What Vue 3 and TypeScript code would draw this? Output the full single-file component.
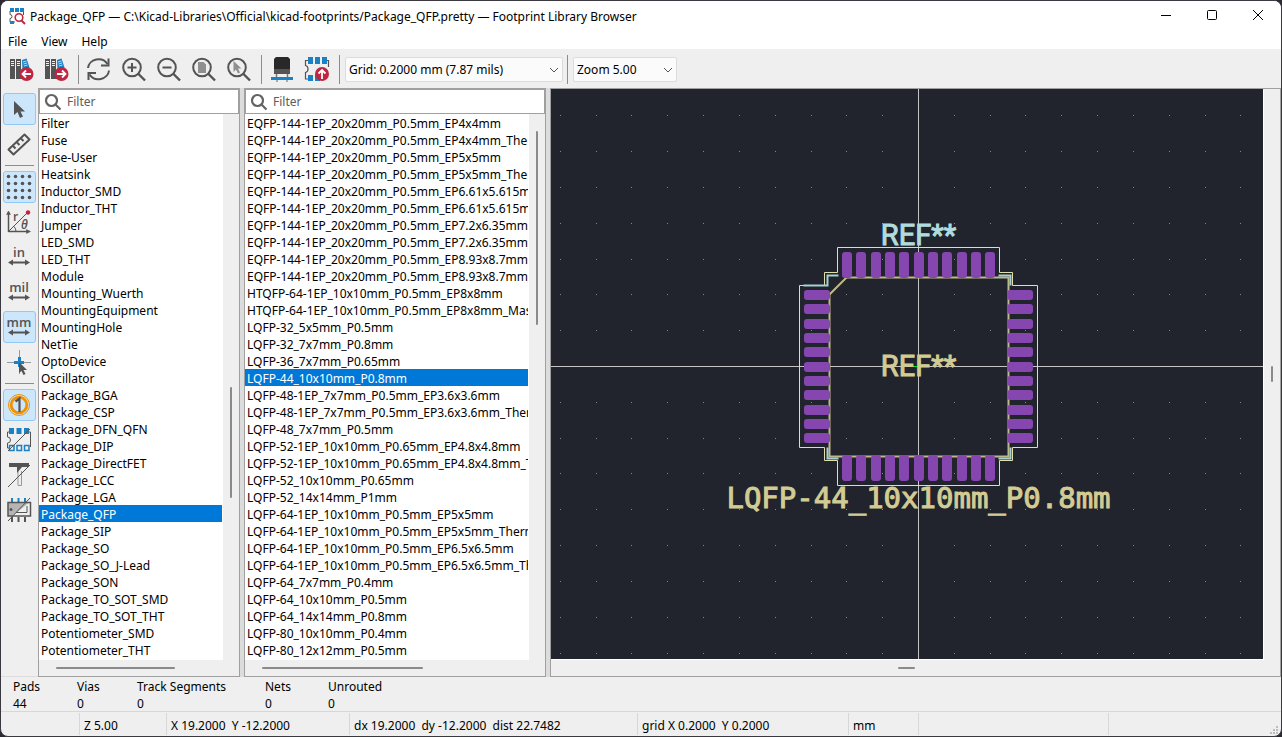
<script setup lang="ts">
import { ref } from 'vue'

const libraries: string[] = [
  'Filter', 'Fuse', 'Fuse-User', 'Heatsink', 'Inductor_SMD', 'Inductor_THT', 'Jumper', 'LED_SMD',
  'LED_THT', 'Module', 'Mounting_Wuerth', 'MountingEquipment', 'MountingHole', 'NetTie', 'OptoDevice',
  'Oscillator', 'Package_BGA', 'Package_CSP', 'Package_DFN_QFN', 'Package_DIP', 'Package_DirectFET',
  'Package_LCC', 'Package_LGA', 'Package_QFP', 'Package_SIP', 'Package_SO', 'Package_SO_J-Lead',
  'Package_SON', 'Package_TO_SOT_SMD', 'Package_TO_SOT_THT', 'Potentiometer_SMD', 'Potentiometer_THT',
]
const footprints: string[] = [
  'EQFP-144-1EP_20x20mm_P0.5mm_EP4x4mm',
  'EQFP-144-1EP_20x20mm_P0.5mm_EP4x4mm_ThermalVias',
  'EQFP-144-1EP_20x20mm_P0.5mm_EP5x5mm',
  'EQFP-144-1EP_20x20mm_P0.5mm_EP5x5mm_ThermalVias',
  'EQFP-144-1EP_20x20mm_P0.5mm_EP6.61x5.615mm',
  'EQFP-144-1EP_20x20mm_P0.5mm_EP6.61x5.615mm_ThermalVias',
  'EQFP-144-1EP_20x20mm_P0.5mm_EP7.2x6.35mm',
  'EQFP-144-1EP_20x20mm_P0.5mm_EP7.2x6.35mm_ThermalVias',
  'EQFP-144-1EP_20x20mm_P0.5mm_EP8.93x8.7mm',
  'EQFP-144-1EP_20x20mm_P0.5mm_EP8.93x8.7mm_ThermalVias',
  'HTQFP-64-1EP_10x10mm_P0.5mm_EP8x8mm',
  'HTQFP-64-1EP_10x10mm_P0.5mm_EP8x8mm_Mask4.4x4.4mm',
  'LQFP-32_5x5mm_P0.5mm',
  'LQFP-32_7x7mm_P0.8mm',
  'LQFP-36_7x7mm_P0.65mm',
  'LQFP-44_10x10mm_P0.8mm',
  'LQFP-48-1EP_7x7mm_P0.5mm_EP3.6x3.6mm',
  'LQFP-48-1EP_7x7mm_P0.5mm_EP3.6x3.6mm_ThermalVias',
  'LQFP-48_7x7mm_P0.5mm',
  'LQFP-52-1EP_10x10mm_P0.65mm_EP4.8x4.8mm',
  'LQFP-52-1EP_10x10mm_P0.65mm_EP4.8x4.8mm_ThermalVias',
  'LQFP-52_10x10mm_P0.65mm',
  'LQFP-52_14x14mm_P1mm',
  'LQFP-64-1EP_10x10mm_P0.5mm_EP5x5mm',
  'LQFP-64-1EP_10x10mm_P0.5mm_EP5x5mm_ThermalVias',
  'LQFP-64-1EP_10x10mm_P0.5mm_EP6.5x6.5mm',
  'LQFP-64-1EP_10x10mm_P0.5mm_EP6.5x6.5mm_ThermalVias',
  'LQFP-64_7x7mm_P0.4mm',
  'LQFP-64_10x10mm_P0.5mm',
  'LQFP-64_14x14mm_P0.8mm',
  'LQFP-80_10x10mm_P0.4mm',
  'LQFP-80_12x12mm_P0.5mm',
]
const currentLibrary = ref('Package_QFP')
const currentFootprint = ref('LQFP-44_10x10mm_P0.8mm')

const panels = [
  { id: 'lib', label: 'Libraries', items: libraries, current: currentLibrary, v: [50, 20.4], h: [8.5, 59.5] },
  { id: 'fp', label: 'Footprints', items: footprints, current: currentFootprint, v: [3.1, 35.6], h: [5.7, 53.7] },
]
const canvasScroll = { v: [48.6, 2.8], h: [47.6, 2.3] }

const stats = [
  ['Pads', '44'], ['Vias', '0'], ['Track Segments', '0'], ['Nets', '0'], ['Unrouted', '0'],
]

/* Canvas: the origin is the footprint's centre, and one drawing unit is one pixel at zoom 5. */
const gridStep = 35.83
const dots: { x: number; y: number }[] = []
for (let c = -10; c <= 9; c++) {
  for (let r = -7; r <= 8; r++) {
    if (c !== 0 && r !== 0) dots.push({ x: Math.round(c * gridStep) - 0.5, y: Math.round(r * gridStep) - 0.5 })
  }
}
const padOffsets = Array.from({ length: 11 }, (_, i) => Math.floor((i - 5) * 14.33 - 4.98) + 0.5)
</script>

<template>
  <div class="window">
    <header class="titlebar">
      <svg class="app-icon" width="18" height="18" viewBox="0 0 18 18" aria-hidden="true">
        <path d="M2 4v3.500a2 2 0 0 1 0 4V15h5M15.500 4v4" fill="none" stroke="#555" />
        <path d="M2 1h4v4H2zM7 1h4v4H7zM12 1h4v4h-4zM2 14h4v3H2z" fill="#1a81c4" />
        <circle cx="11" cy="10.500" r="3.800" fill="#fff" stroke="#bf2641" stroke-width="1.600" />
        <path d="M13.500 13.500 17 17" stroke="#bf2641" stroke-width="2" />
      </svg>
      <h1>Package_QFP — C:\Kicad-Libraries\Official\kicad-footprints/Package_QFP.pretty — Footprint Library Browser</h1>
      <div class="window-buttons">
        <button aria-label="Minimize"><svg width="12" height="12" viewBox="0 0 12 12"><path d="M1 5.500h10" stroke="#000" /></svg></button>
        <button aria-label="Maximize"><svg width="12" height="12" viewBox="0 0 12 12"><rect x="1.500" y=".5" width="9" height="9" rx="1" fill="none" stroke="#000" /></svg></button>
        <button aria-label="Close"><svg width="12" height="12" viewBox="0 0 12 12"><path d="M1 0l10 10M11 0 1 10" stroke="#000" /></svg></button>
      </div>
    </header>

    <nav class="menubar" aria-label="Main menu">
      <button>File</button><button>View</button><button>Help</button>
    </nav>

    <div class="toolbar" role="toolbar" aria-label="Main toolbar">
      <button v-for="dir in ['Previous', 'Next']" :key="dir" :aria-label="dir + ' footprint'">
        <svg width="26" height="26" viewBox="0 0 26 26">
          <path d="M2 2h5v20H2zM8 2h5v20H8z" fill="#545454" />
          <path d="M3 4.500h3M3 6.500h3M3 8.500h3M9 4.500h3M9 6.500h3M9 8.500h3" stroke="#ededed" />
          <path d="m14 3 4.500-1.500 3 9-7 3z" fill="#1a81c4" />
          <path d="m15 5 3.500-1M15.500 7l3.500-1M16 9l3.500-1" stroke="#ededed" stroke-width=".8" />
          <path d="m13.500 12-1.500 10h3z" fill="#545454" />
          <circle cx="18.500" cy="17" r="7" fill="#bf2641" />
          <path
            :d="dir === 'Previous' ? 'M23 17h-8M18 13.500 14.500 17l3.500 3.500' : 'M14 17h8M19 13.500l3.500 3.500-3.500 3.500'"
            fill="none" stroke="#fff" stroke-width="1.800"
          />
        </svg>
      </button>
      <span class="sep" />
      <button aria-label="Refresh">
        <svg width="26" height="26" viewBox="0 0 26 26" fill="none" stroke="#545454" stroke-width="2">
          <path d="M2 11a10.500 9.500 0 0 1 19.500-4M23 13.500a10.500 9.500 0 0 1-19.500 4" />
          <path d="M22.500 1.500v7H15M2.500 23v-7H10" />
        </svg>
      </button>
      <button v-for="z in ['in', 'out', 'fit', 'selection']" :key="z" :aria-label="'Zoom ' + z">
        <svg width="26" height="26" viewBox="0 0 26 26" fill="none" stroke="#545454" stroke-width="2">
          <circle cx="11" cy="10.500" r="8.800" />
          <path d="m17 16.500 7 7" stroke-width="2.400" />
          <path v-if="z === 'in'" d="M6.500 10.500h9M11 6v9" />
          <path v-if="z === 'out'" d="M6.500 10.500h9" />
          <path v-if="z === 'fit'" d="M7 5h5.500l2.500 2.500v8.500H7z" fill="#8f8f8f" stroke="none" />
          <path v-if="z === 'selection'" d="M7.500 4v11l2.500-2.500 2 4 2-1-2-4h3.500z" fill="#8f8f8f" stroke="none" />
        </svg>
      </button>
      <span class="sep" />
      <button aria-label="3D viewer">
        <svg width="26" height="26" viewBox="0 0 26 26">
          <path d="M7 0h12l2 2v11H5V2z" fill="#282828" />
          <path d="M5 12h16v5H5z" fill="#545454" />
          <path d="M7.500 17v4M18.500 17v4" stroke="#777" stroke-width="1.500" />
          <path d="M2 20h22v3H2z" fill="#1a81c4" />
          <path d="M7 23h2v2H7zM17 23h2v2h-2z" fill="#aaa" />
        </svg>
      </button>
      <button aria-label="Insert footprint in board">
        <svg width="26" height="26" viewBox="0 0 26 26">
          <path d="M4 3.500H1.500v5Q4 9 4 12t-2.500 3.500V22H4M22 3.500h2.500V10" fill="none" stroke="#545454" stroke-width="1.200" />
          <path d="M4 0h5v7H4zM11 0h5v7h-5zM18 0h5v7h-5zM4 18h5v6H4zM11 18h5v6h-5z" fill="#1a81c4" />
          <circle cx="18" cy="17" r="7" fill="#bf2641" />
          <path d="M18 22v-9M14.500 16.500 18 13l3.500 3.500" fill="none" stroke="#fff" stroke-width="1.800" />
        </svg>
      </button>
      <span class="sep" />
      <div class="combo grid-combo">
        <select aria-label="Grid"><option>Grid: 0.2000 mm (7.87 mils)</option></select>
        <svg width="10" height="6" viewBox="0 0 10 6" aria-hidden="true"><path d="m1 1 4 4 4-4" fill="none" stroke="#555" /></svg>
      </div>
      <span class="sep" />
      <div class="combo zoom-combo">
        <select aria-label="Zoom"><option>Zoom 5.00</option></select>
        <svg width="10" height="6" viewBox="0 0 10 6" aria-hidden="true"><path d="m1 1 4 4 4-4" fill="none" stroke="#555" /></svg>
      </div>
    </div>

    <main class="content">
      <div class="sidebar" role="toolbar" aria-label="Display options" aria-orientation="vertical">
        <button class="on" aria-label="Select" aria-pressed="true">
          <svg width="26" height="26" viewBox="0 0 26 26"><path d="M8 5v14l3.500-3 2.500 6 3-1.500-2.500-5H19z" fill="#545454" /></svg>
        </button>
        <button aria-label="Measure">
          <svg width="26" height="26" viewBox="0 0 26 26" fill="none" stroke="#545454" stroke-width="2">
            <path d="m2.500 18.500 16-15 5 5-16 15z" stroke-linejoin="round" />
            <path d="m7 15 2.500 2.500M11 11.500l2.500 2.500M15 7.500l2.500 2.500" />
          </svg>
        </button>
        <hr />
        <button class="on" aria-label="Grid" aria-pressed="true">
          <svg width="26" height="26" viewBox="0 0 26 26" fill="#545454">
            <template v-for="r in 4" :key="r">
              <circle v-for="c in 4" :key="c" :cx="c * 7 - 4.500" :cy="r * 7 - 4.500" r="1.800" />
            </template>
          </svg>
        </button>
        <button aria-label="Polar coordinates">
          <svg width="26" height="26" viewBox="0 0 26 26" fill="none" stroke="#545454">
            <path d="M2.500 23V3M2.500 22.500H22" stroke-width="1.500" />
            <path d="M.5 5.500 2.500 2l2 3.500zM20.500 20.500l4 2-4 2z" fill="#545454" stroke-width=".5" />
            <path d="M2.500 22.500 21 4M8 17.500q2 2 2 5" />
            <circle cx="22" cy="3.500" r="2.200" fill="#bf2641" stroke="none" />
            <text x="7" y="12" class="glyph">r</text>
            <text x="15" y="20" class="glyph theta">θ</text>
          </svg>
        </button>
        <button v-for="u in ['in', 'mil', 'mm']" :key="u" :class="{ on: u === 'mm' }" :aria-pressed="u === 'mm'">
          <svg width="26" height="26" viewBox="0 0 26 26">
            <text x="13" y="13" class="unit">{{ u }}</text>
            <path d="M6 18.500h14" stroke="#545454" stroke-width="2" />
            <path d="m2 18.500 5-3v6zM24 18.500l-5-3v6z" fill="#545454" />
          </svg>
        </button>
        <button aria-label="Full-window crosshair">
          <svg width="26" height="26" viewBox="0 0 26 26">
            <path d="M1 13.500h24M13.500 1v24" stroke="#999" />
            <path d="M8 13.500h10M13.500 8v10" stroke="#1a81c4" stroke-width="3" />
            <path d="M13 13v11l2.500-2 2 4 2-1-2-4H21z" fill="#545454" />
          </svg>
        </button>
        <hr />
        <button class="on" aria-label="Pad numbers" aria-pressed="true">
          <svg width="26" height="26" viewBox="0 0 26 26" fill="none">
            <circle cx="13" cy="13" r="10.500" stroke="#f29100" />
            <circle cx="13" cy="13" r="7.800" stroke="#f29100" stroke-width="2.800" />
            <path d="m9.500 9.500 4-3V20" stroke="#545454" stroke-width="2.200" />
          </svg>
        </button>
        <button aria-label="Pad outlines">
          <svg width="26" height="26" viewBox="0 0 26 26" fill="none">
            <path d="M4 5H1.500v5q3 0 3 3t-3 3v5H4M22 5h2.500v15" stroke="#545454" />
            <path d="M3 1h5v6H3zM10.500 1h5v6h-5zM18 1h5v6h-5z" fill="#1a81c4" />
            <path d="M3.500 18.500h4.500v5H3.500zM11 18.500h4.500v5H11zM18.500 18.500H23v5h-4.500z" stroke="#1a81c4" stroke-width="1.500" />
            <path d="M2 24 24 2" stroke="#545454" />
          </svg>
        </button>
        <button aria-label="Text outlines">
          <svg width="26" height="26" viewBox="0 0 26 26" fill="none">
            <path d="M12 9v14.500h3.500V9" stroke="#999" />
            <path d="M3 1h20v4H16L11 11V5H3z" fill="#545454" />
            <path d="M2 25 24 3" stroke="#545454" />
          </svg>
        </button>
        <button aria-label="Graphic outlines">
          <svg width="26" height="26" viewBox="0 0 26 26" fill="none">
            <path d="M6 1v4M12.500 1v4M19 1v4" stroke="#1a81c4" stroke-width="2" />
            <path d="M2 5h22L6 19H2z" fill="#b5b5b5" />
            <path d="M2 5.500h22.500V19H2z" stroke="#545454" stroke-width="1.500" />
            <path d="M21 9v6.500H10" stroke="#545454" />
            <circle cx="5" cy="12.500" r="1.500" fill="#545454" />
            <path d="M6 20v5M12.500 20v5M19 20v5" stroke="#545454" stroke-width="2" />
            <path d="M2 24 24 1" stroke="#545454" />
          </svg>
        </button>
      </div>

      <section v-for="p in panels" :key="p.id" class="panel" :class="p.id" :aria-label="p.label">
        <label class="filter">
          <svg width="18" height="18" viewBox="0 0 18 18" aria-hidden="true" fill="none" stroke="#636363" stroke-width="2.200">
            <circle cx="7.500" cy="7.500" r="5.500" /><path d="m11.500 11.500 5 5" />
          </svg>
          <input type="text" placeholder="Filter" :aria-label="'Filter ' + p.label" />
        </label>
        <ul role="listbox" :aria-label="p.label">
          <li
            v-for="item in p.items" :key="item" role="option"
            :aria-selected="item === p.current.value" @click="p.current.value = item"
          >{{ item }}</li>
        </ul>
        <div class="track-v"><i :style="{ top: p.v[0] + '%', height: p.v[1] + '%' }" /></div>
        <div class="track-h"><i :style="{ left: p.h[0] + '%', width: p.h[1] + '%' }" /></div>
      </section>

      <section class="canvas" aria-label="Footprint preview">
        <svg class="board" viewBox="-367.500 -277.500 712 570" preserveAspectRatio="xMidYMid slice">
          <rect v-for="(d, i) in dots" :key="i" :x="d.x" :y="d.y" width="1" height="1" fill="#85878a" />
          <path d="M-800 0H800M0-800V800" stroke="#c4c4c6" />
          <path
            d="M-81-119H81V-94H94V-81H119V81H94V94H81V119H-81V94H-94V81H-119V-81H-94V-94H-81z"
            fill="none" stroke="#e2dfab"
          />
          <path d="M-72-89H90V90H-89V-72z" fill="none" stroke="#bfb887" stroke-width="2" />
          <path
            d="M-115-81H-91V-91H-80M80-91H92V-81M-91 81V92H-80M92 81V92H80"
            fill="none" stroke="#a5d0d5" stroke-width="2"
          />
          <g fill="#8546b0">
            <template v-for="o in padOffsets" :key="o">
              <rect :x="o" y="-114.500" width="10" height="26" rx="3" />
              <rect :x="o" y="88.500" width="10" height="26" rx="3" />
              <rect x="-114.500" :y="o" width="26" height="10" rx="3" />
              <rect x="88.500" :y="o" width="26" height="10" rx="3" />
            </template>
          </g>
          <path d="M-5 0H0" stroke="#00e000" />
          <text class="ref silk" x="0" y="-122">REF**</text>
          <text class="ref" x="0" y="9">REF**</text>
          <text class="value" x="0" y="141">LQFP-44_10x10mm_P0.8mm</text>
        </svg>
        <div class="track-v"><i :style="{ top: canvasScroll.v[0] + '%', height: canvasScroll.v[1] + '%' }" /></div>
        <div class="track-h"><i :style="{ left: canvasScroll.h[0] + '%', width: canvasScroll.h[1] + '%' }" /></div>
      </section>
    </main>

    <dl class="stats">
      <div v-for="s in stats" :key="s[0]"><dt>{{ s[0] }}</dt><dd>{{ s[1] }}</dd></div>
    </dl>

    <footer class="status">
      <span />
      <span>Z 5.00</span>
      <span>X 19.2000&nbsp; Y -12.2000</span>
      <span>dx 19.2000&nbsp; dy -12.2000&nbsp; dist 22.7482</span>
      <span>grid X 0.2000&nbsp; Y 0.2000</span>
      <span>mm</span>
      <span />
      <span class="grip">
        <svg width="9" height="9" viewBox="0 0 9 9" fill="#bdbdbd" aria-hidden="true">
          <path d="M6 0h2v2H6zM3 3h2v2H3zM6 3h2v2H6zM0 6h2v2H0zM3 6h2v2H3zM6 6h2v2H6z" />
        </svg>
      </span>
    </footer>
  </div>
</template>

<style>
body { background: #2b2a33; }
</style>

<style scoped>
.window {
  box-sizing: border-box;
  display: flex;
  flex-direction: column;
  height: 100vh;
  border: 1px solid #3a3940;
  border-radius: 8px;
  overflow: hidden;
  background: #efefef;
  color: #000;
  font: 12px/19px "Noto Sans", "Open Sans", sans-serif;
}
button, input, select { font: inherit; color: inherit; border: 0; padding: 0; margin: 0; background: none; }
svg { display: block; flex: none; overflow: visible; }

.titlebar { display: flex; align-items: center; height: 30px; background: #fff; padding-left: 7px; gap: 4px; }
h1 { flex: 1; margin: 0; font: inherit; white-space: nowrap; overflow: hidden; }
.window-buttons { display: flex; }
.window-buttons button { width: 46px; height: 30px; display: grid; place-items: center; }

.menubar { display: flex; box-sizing: border-box; height: 18px; background: #fff; gap: 14px; padding: 1px 0 0 7px; }
.menubar button { height: 19px; }

.toolbar { display: flex; align-items: center; box-sizing: border-box; height: 39px; padding: 2px 0 0 3px; }
.toolbar > button { width: 35px; height: 35px; padding-right: 2px; display: grid; place-items: center; }
.sep { box-sizing: border-box; width: 6px; height: 29px; border-right: 1px solid #8c8c8c; margin: 0 3px 0 -1px; }
.combo { display: flex; align-items: center; height: 25px; box-sizing: border-box; border: 1px solid #dcdcdc; border-radius: 2px; background: #fbfbfb; position: relative; }
.combo select { appearance: none; width: 100%; height: 100%; padding-left: 3px; }
.combo svg { position: absolute; right: 3px; pointer-events: none; }
.grid-combo { width: 218px; margin-left: 2px; }
.zoom-combo { width: 104px; margin-left: 2px; }

.content { flex: 1; min-height: 0; display: flex; gap: 4px; background: #dcdcdc; }

.sidebar { width: 37px; margin-right: -4px; box-sizing: border-box; padding: 5px 2px; display: flex; flex-direction: column; gap: 3px; background: #efefef; border-bottom: 1px solid #dcdcdc; }
.sidebar button { box-sizing: border-box; height: 32px; width: 33px; padding-right: 2px; border: 1px solid transparent; border-radius: 3px; display: grid; place-items: center; }
.sidebar .on { background: #cce6fc; border-color: #90c8f6; }
.sidebar hr { width: 29px; height: 1px; border: 0; margin: 2px; background: #8c8c8c; }
.unit { font: 600 13px "Open Sans", sans-serif; fill: #545454; text-anchor: middle; }
.glyph { font: 600 12px "Open Sans", sans-serif; fill: #545454; stroke: none; }
.theta { font-style: italic; }

.panel, .canvas { box-sizing: border-box; border: 1px solid #a0a0a0; display: grid; background: #efefef; min-width: 0; }
.panel { grid-template: 25px minmax(0, 1fr) 16px / minmax(0, 1fr) 16px; }
.lib { width: 202px; }
.fp { width: 302px; }
.filter { grid-column: 1 / 3; display: flex; align-items: center; gap: 5px; padding-left: 4px; background: #fff; border: 1px solid #a0a0a0; }
.filter input { flex: 1; min-width: 0; outline: 0; }
.filter input::placeholder { color: #5c5c5c; opacity: 1; }
.panel ul { margin: 0; padding: 0; list-style: none; background: #fff; overflow: hidden; }
.panel li { height: 17px; padding-left: 2px; margin-right: 1px; white-space: nowrap; overflow: hidden; }
.panel li[aria-selected="true"] { background: #0078d7; color: #fff; }
.track-v, .track-h { position: relative; }
.track-h { grid-column: 1 / 3; }
.track-v i, .track-h i { position: absolute; background: #8a8a8a; border-radius: 1px; }
.track-v i { left: 7px; width: 2px; }
.track-h i { top: 7px; height: 2px; }

.canvas { flex: 1; grid-template: minmax(0, 1fr) 17px / minmax(0, 1fr) 17px; }
.canvas .track-v i { left: 8px; }
.canvas .track-h i { top: 8px; }
.board { width: 100%; height: 100%; overflow: hidden; background: #21242c; box-shadow: 1px 1px 0 #fff; }
.ref, .value { text-anchor: middle; fill: #d2cc94; stroke: #d2cc94; stroke-width: 1; }
.ref { font: 29px Roboto, sans-serif; }
.value { font: 29px "DejaVu Sans Mono", monospace; }
.ref.silk { fill: #b0dcdf; stroke: #b0dcdf; }

.stats { margin: 0; height: 35px; line-height: 17px; padding: 1px 0 0 12px; box-sizing: border-box; display: grid; grid-template-columns: 64px 60px 128px 63px auto; border-bottom: 1px solid #d7d7d7; }
.stats dd { margin: 0; }

.status { height: 24px; display: grid; grid-template-columns: 79px 87px 183px 288px 211px 70px 190px 1fr; align-items: center; }
.status span { box-sizing: border-box; height: 22px; line-height: 25px; padding-left: 4px; border-right: 1px solid #d7d7d7; white-space: nowrap; }
.status .grip { border: 0; display: flex; align-items: flex-end; justify-content: flex-end; padding-right: 2px; }
</style>
